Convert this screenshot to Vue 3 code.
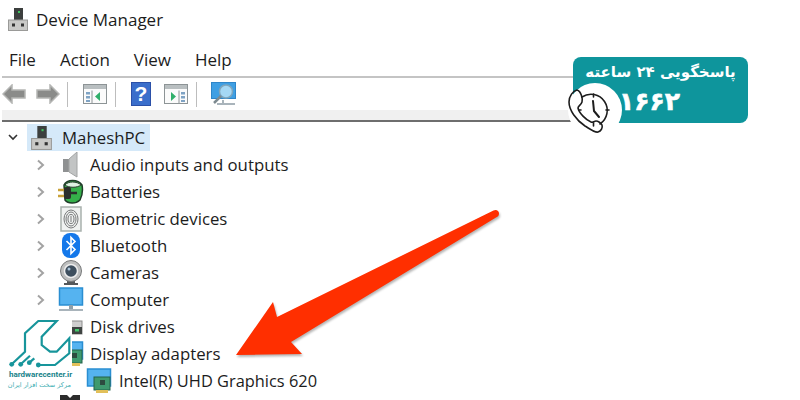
<script setup>
const menus = ['File', 'Action', 'View', 'Help'];

const devices = [
  { label: 'Audio inputs and outputs', icon: 'audio' },
  { label: 'Batteries', icon: 'battery' },
  { label: 'Biometric devices', icon: 'bio' },
  { label: 'Bluetooth', icon: 'bluetooth' },
  { label: 'Cameras', icon: 'camera' },
  { label: 'Computer', icon: 'computer' },
  { label: 'Disk drives', icon: 'disk' },
  { label: 'Display adapters', icon: 'display' },
];
</script>

<template>
  <div class="page">
    <div class="window">
      <header class="title-bar">
        <svg class="device-icon" width="20" height="23" viewBox="0 0 20 23">
          <rect x="6" y="0" width="9" height="13" fill="#3c3f3e" />
          <rect x="10" y="3" width="2" height="2" fill="#3fc45f" />
          <rect x="0.500" y="12" width="19" height="10.500" fill="#c9c9c7" stroke="#9a9a98" />
          <rect x="4" y="15.500" width="3" height="3" fill="#333" />
          <rect x="13" y="15.500" width="3" height="3" fill="#333" />
        </svg>
        <h1>Device Manager</h1>
      </header>

      <nav class="menu">
        <span v-for="item in menus" :key="item">{{ item }}</span>
      </nav>

      <div class="toolbar">
        <svg class="tool back" width="24" height="20" viewBox="0 0 24 20">
          <path d="M1 10 10 1v5h13v8H10v5z" fill="#8a8b89" stroke="#b5b6b4" stroke-width="1.500" />
        </svg>
        <svg class="tool forward" width="24" height="20" viewBox="0 0 24 20">
          <path d="M23 10 14 1v5H1v8h13v5z" fill="#8a8b89" stroke="#b5b6b4" stroke-width="1.500" />
        </svg>
        <i class="sep sep-a"></i>
        <svg class="tool win-a" width="24" height="20" viewBox="0 0 24 20">
          <rect x="0.500" y="0.500" width="23" height="19" fill="#fbfbfb" stroke="#8d9496" />
          <rect x="1" y="1" width="22" height="4" fill="#b9bfc1" />
          <rect x="3" y="8" width="4" height="2.500" fill="#7fa3c4" />
          <rect x="3" y="12" width="4" height="2.500" fill="#7fa3c4" />
          <rect x="3" y="16" width="4" height="2" fill="#7fa3c4" />
          <path d="M9 6.500v13" stroke="#8d9496" />
          <path d="M12 12.500 17 8v9z" fill="#31b06b" />
        </svg>
        <i class="sep sep-b"></i>
        <svg class="tool help" width="20" height="24" viewBox="0 0 20 24">
          <rect width="20" height="24" fill="#2b50a8" />
          <rect x="1" y="1" width="18" height="22" fill="#3a6ecb" />
          <text x="10" y="19" text-anchor="middle" class="help-mark">?</text>
        </svg>
        <svg class="tool win-b" width="24" height="20" viewBox="0 0 24 20">
          <rect x="0.500" y="0.500" width="23" height="19" fill="#fbfbfb" stroke="#8d9496" />
          <rect x="1" y="1" width="22" height="4" fill="#b9bfc1" />
          <rect x="17" y="8" width="4" height="2.500" fill="#7fa3c4" />
          <rect x="17" y="12" width="4" height="2.500" fill="#7fa3c4" />
          <rect x="17" y="16" width="4" height="2" fill="#7fa3c4" />
          <path d="M15 6.500v13" stroke="#8d9496" />
          <path d="M7 8l5 4.500L7 17z" fill="#31b06b" />
        </svg>
        <i class="sep sep-c"></i>
        <svg class="tool scan" width="25" height="24" viewBox="0 0 25 24">
          <rect x="0.500" y="0.500" width="24" height="16" fill="#3f9fe3" stroke="#2f86c9" />
          <path d="M6 22h18" stroke="#a9b4bb" stroke-width="2" />
          <path d="M12 18v3" stroke="#a9b4bb" stroke-width="2" />
          <circle cx="15" cy="9.500" r="6.500" fill="#a5d8f5" stroke="#7fa6bd" stroke-width="1.500" />
          <path d="M10 14 3 21" stroke="#7d8a90" stroke-width="2.500" />
        </svg>
      </div>
      <div class="band"></div>

      <section class="tree">
        <div class="row root">
          <svg class="chevron" width="10" height="7" viewBox="0 0 10 7">
            <path d="M1 1l4 4 4-4" fill="none" stroke="#333" stroke-width="1.600" />
          </svg>
          <div class="selected">
            <svg width="21" height="24" viewBox="0 0 20 23">
              <rect x="6" y="0" width="9" height="13" fill="#3c3f3e" />
              <rect x="10" y="3" width="2" height="2" fill="#3fc45f" />
              <rect x="0.500" y="12" width="19" height="10.500" fill="#c9c9c7" stroke="#9a9a98" />
              <rect x="4" y="15.500" width="3" height="3" fill="#333" />
              <rect x="13" y="15.500" width="3" height="3" fill="#333" />
            </svg>
            <span>MaheshPC</span>
          </div>
        </div>

        <div v-for="device in devices" :key="device.label" class="row child">
          <svg class="chevron" width="10" height="12" viewBox="0 0 10 12">
            <path d="M2 1.500 7 6l-5 4.500" fill="none" stroke="#a3a3a3" stroke-width="2" />
          </svg>
          <svg class="row-icon" width="26" height="26" viewBox="0 0 26 26">
            <template v-if="device.icon === 'audio'">
              <rect x="5" y="7" width="7" height="13" fill="#8f9192" />
              <path d="M11 7 19 0v25l-8-5z" fill="#c2c4c4" stroke="#a2a4a4" />
            </template>
            <template v-else-if="device.icon === 'battery'">
              <path d="M6 6c3-6 14-6 18 0 1 5 0 11-2 15-4 4-12 4-15 0z" fill="#35b04a" stroke="#1f3b28" stroke-width="1.500" />
              <path d="M7 6c3-4 12-4 16 0-4 3-12 3-16 0z" fill="#dff2e2" stroke="#2c3b2f" />
              <path d="M0 11h7M0 17h7" stroke="#c9a23a" stroke-width="2.500" />
              <rect x="6" y="8" width="7" height="12" rx="2" fill="#2b2e2c" />
              <path d="M13 14h6" stroke="#2b2e2c" stroke-width="2.500" />
            </template>
            <template v-else-if="device.icon === 'bio'">
              <rect x="3" y="1" width="20" height="24" fill="#f0f2f1" stroke="#a9b1ad" stroke-width="1.500" />
              <g fill="none" stroke="#77797a">
                <ellipse cx="13" cy="13" rx="7" ry="9" />
                <ellipse cx="13" cy="13" rx="5" ry="7" />
                <ellipse cx="13" cy="13" rx="3" ry="4.500" />
                <path d="M13 10v6" />
              </g>
            </template>
            <template v-else-if="device.icon === 'bluetooth'">
              <rect x="4" y="0" width="18" height="25" rx="8" fill="#1478ea" />
              <path d="M8.500 8 17 16.500l-4 4V4.500l4 4L8.500 17" fill="none" stroke="#fff" stroke-width="1.600" />
            </template>
            <template v-else-if="device.icon === 'camera'">
              <rect x="9" y="20" width="8" height="3" fill="#55585a" />
              <rect x="6" y="23" width="14" height="2" fill="#55585a" />
              <circle cx="13" cy="11" r="10.500" fill="#bdbebe" stroke="#77797a" />
              <circle cx="13" cy="11" r="6.500" fill="#3e4f5e" stroke="#eee" stroke-width="1.500" />
              <circle cx="11" cy="9" r="1.500" fill="#a9c3d9" />
            </template>
            <template v-else-if="device.icon === 'computer'">
              <rect x="1.500" y="1" width="23" height="17" fill="#55b3f0" stroke="#2a8ed2" stroke-width="1.500" />
              <rect x="11" y="18" width="4" height="4" fill="#8fa0aa" />
              <rect x="1" y="22" width="24" height="2" fill="#a9b4bb" />
            </template>
            <template v-else-if="device.icon === 'disk'">
              <rect x="4" y="7" width="20" height="13" fill="#cfcfcf" stroke="#8c8c8c" />
              <rect x="4" y="13" width="20" height="7" fill="#3f4442" />
              <rect x="17" y="15" width="4" height="2.500" fill="#42c96b" />
            </template>
            <template v-else>
              <rect x="1.500" y="1" width="23" height="17" fill="#55b3f0" stroke="#2a8ed2" stroke-width="1.500" />
              <rect x="8" y="9" width="16" height="13" fill="#3f9a6f" stroke="#25624a" />
              <rect x="14" y="12" width="5" height="5" fill="#2d4c40" />
              <path d="M10 22v3h12v-3" fill="#e2c05a" />
            </template>
          </svg>
          <span>{{ device.label }}</span>
        </div>

        <div class="row grandchild">
          <svg class="row-icon" width="26" height="26" viewBox="0 0 26 26">
            <rect x="1.500" y="1" width="23" height="17" fill="#55b3f0" stroke="#2a8ed2" stroke-width="1.500" />
            <rect x="8" y="9" width="16" height="13" fill="#3f9a6f" stroke="#25624a" />
            <rect x="14" y="12" width="5" height="5" fill="#2d4c40" />
            <path d="M10 22v3h12v-3" fill="#e2c05a" />
          </svg>
          <span>Intel(R) UHD Graphics 620</span>
        </div>

        <div class="row next">
          <svg class="row-icon" width="20" height="26" viewBox="0 0 20 26">
            <path d="M0 0h7l3 3 3-3h7v12H0z" fill="#2c2c2c" />
          </svg>
        </div>
      </section>
    </div>

    <aside class="badge">
      <div class="badge-circle"></div>
      <p class="badge-title">پاسخگویی ۲۴ ساعته</p>
      <p class="badge-number">۱۶۶۲</p>
      <svg class="phone" width="50" height="50" viewBox="0 0 50 50">
        <g fill="none" stroke="#1d1d1d" stroke-width="1.600" stroke-linecap="round">
          <path d="M11 2C7 3 3 8 3 14c0 8 7 18 16 24 5 3 10 7 13 6 3-1 5-4 4-7-1-2-4-4-6-4s-3 2-5 1c-5-2-12-9-13-14 0-2 3-3 4-6 1-3-1-11-5-12z" />
          <path d="M16 9A16 16 0 1 1 34 36" />
          <path d="M27.500 6v3M43 22h-3M27.500 38v-3M15 22h-2" />
          <path d="M27 13l1 10 5 6" stroke-width="2" />
        </g>
      </svg>
    </aside>

    <svg class="arrow" width="280" height="160" viewBox="0 0 280 160">
      <path
        d="M258.500 1.500C261 0 264 1.500 264 4.500 264 6.500 263 7.500 261 8.500L56 133 67 145 1 146 38 93 42 108z"
        fill="#ff2f00"
        class="arrow-shape"
      />
    </svg>

    <div class="logo">
      <svg width="62" height="48" viewBox="0 0 62 48">
        <g fill="none" stroke="#17959b" stroke-width="2.200">
          <path d="M2.700 43.300 16 30.700V12.300L29.300 0h18.400L32.700 15.700V24L41 30.700h6.700l12.600-13.400v15L46 44H29.300" />
          <path d="M11.700 43.300 21 34.700M20.300 41.700l5-4.400" />
        </g>
        <g fill="#17959b">
          <circle cx="2.700" cy="43.300" r="2.400" />
          <circle cx="11.700" cy="43.300" r="2.400" />
          <circle cx="20.300" cy="41.700" r="2.400" />
          <circle cx="29.300" cy="44" r="2.400" />
        </g>
      </svg>
      <p class="logo-name">hardwarecenter.ir</p>
      <p class="logo-sub">مرکز سخت افزار ایران</p>
    </div>
  </div>
</template>

<style>
html,
body {
  margin: 0;
  background: #fff;
}
</style>

<style scoped>
.page {
  position: relative;
  width: 800px;
  height: 400px;
  overflow: hidden;
  background: #fff;
  font-family: "Open Sans", "Liberation Sans", sans-serif;
  color: #1c1c1c;
}

.window {
  width: 640px;
}

/* title and menu */
.title-bar {
  height: 38px;
  display: flex;
  align-items: center;
  padding-left: 8px;
  gap: 8px;
  box-sizing: border-box;
}
.title-bar h1 {
  margin: 0;
  font-size: 17px;
  font-weight: 400;
}
.menu {
  height: 38px;
  display: flex;
  align-items: center;
  gap: 24px;
  padding-left: 9px;
  padding-top: 4px;
  box-sizing: border-box;
  font-size: 17px;
}

/* toolbar */
.toolbar {
  margin-left: 2px;
  height: 34px;
  border-top: 2px solid #c4c4c4;
  box-sizing: border-box;
  display: flex;
  align-items: center;
}
.tool {
  flex: none;
}
.forward {
  margin-left: 10px;
}
.sep {
  width: 1px;
  height: 25px;
  background: #bdbdbd;
}
.sep-a {
  margin-left: 7px;
}
.win-a {
  margin-left: 15px;
}
.sep-b {
  margin-left: 8px;
}
.help {
  margin-left: 15px;
}
.win-b {
  margin-left: 13px;
}
.sep-c {
  margin-left: 8px;
}
.scan {
  margin-left: 14px;
}
.help-mark {
  font-family: "Liberation Sans", sans-serif;
  font-size: 21px;
  font-weight: 700;
  fill: #fff;
}
.band {
  margin-left: 2px;
  height: 10px;
  background: #f0f0f0;
  border-bottom: 2px solid #6e6e6e;
}

/* tree */
.tree {
  padding-top: 2px;
  font-size: 16.800px;
}
.row {
  height: 27px;
  display: flex;
  align-items: center;
  white-space: nowrap;
}
.root {
  padding-left: 8px;
}
.root .chevron {
  margin-right: 9px;
}
.selected {
  width: 123px;
  height: 27px;
  box-sizing: border-box;
  background: #d5e9f9;
  display: flex;
  align-items: center;
  gap: 10px;
  padding-left: 4px;
}
.child {
  padding-left: 36px;
}
.child .chevron {
  margin-right: 12px;
}
.child .row-icon {
  margin-right: 6px;
}
.grandchild {
  padding-left: 86px;
  font-size: 16.400px;
}
.grandchild .row-icon {
  margin-right: 7px;
}
.next {
  padding-left: 60px;
}

/* support badge */
.badge {
  position: absolute;
  left: 573px;
  top: 57px;
  width: 175px;
  height: 66px;
  border-radius: 8px;
  background: #0e959c;
  color: #fff;
  font-family: "DejaVu Sans", sans-serif;
  font-weight: 700;
  display: flex;
  flex-direction: column;
  direction: rtl;
}
.badge-title {
  margin: 4px 0 0;
  font-size: 15px;
  line-height: 22px;
  text-align: center;
}
.badge-number {
  margin: 0;
  padding-right: 68px;
  font-size: 25px;
  line-height: 38px;
  letter-spacing: -3px;
  -webkit-text-stroke: 0.6px #fff;
}
.badge-circle {
  position: absolute;
  left: -5px;
  top: 26px;
  width: 54px;
  height: 54px;
  border-radius: 50%;
  background: #fff;
  clip-path: inset(0 0 14px 0);
}
.phone {
  position: absolute;
  left: -7px;
  top: 31px;
}

/* red arrow */
.arrow {
  position: absolute;
  left: 235px;
  top: 209px;
  overflow: visible;
}
.arrow-shape {
  filter: drop-shadow(1px 2px 1px rgba(90, 90, 90, 0.45));
}

/* logo */
.logo {
  position: absolute;
  left: 0;
  top: 314px;
  width: 72px;
  height: 81px;
  box-sizing: border-box;
  padding: 7px 0 0 9px;
  background: #fff;
  color: #17838a;
  white-space: nowrap;
}
.logo svg {
  display: block;
  overflow: visible;
}
.logo-name {
  margin: 0;
  font-family: Roboto, "Liberation Sans", sans-serif;
  font-size: 8px;
  font-weight: 700;
  line-height: 11px;
}
.logo-sub {
  margin: 0;
  font-family: "DejaVu Sans", sans-serif;
  font-size: 6.500px;
  line-height: 10px;
  color: #41aeb3;
  direction: rtl;
  width: 62px;
  text-align: center;
}
</style>
